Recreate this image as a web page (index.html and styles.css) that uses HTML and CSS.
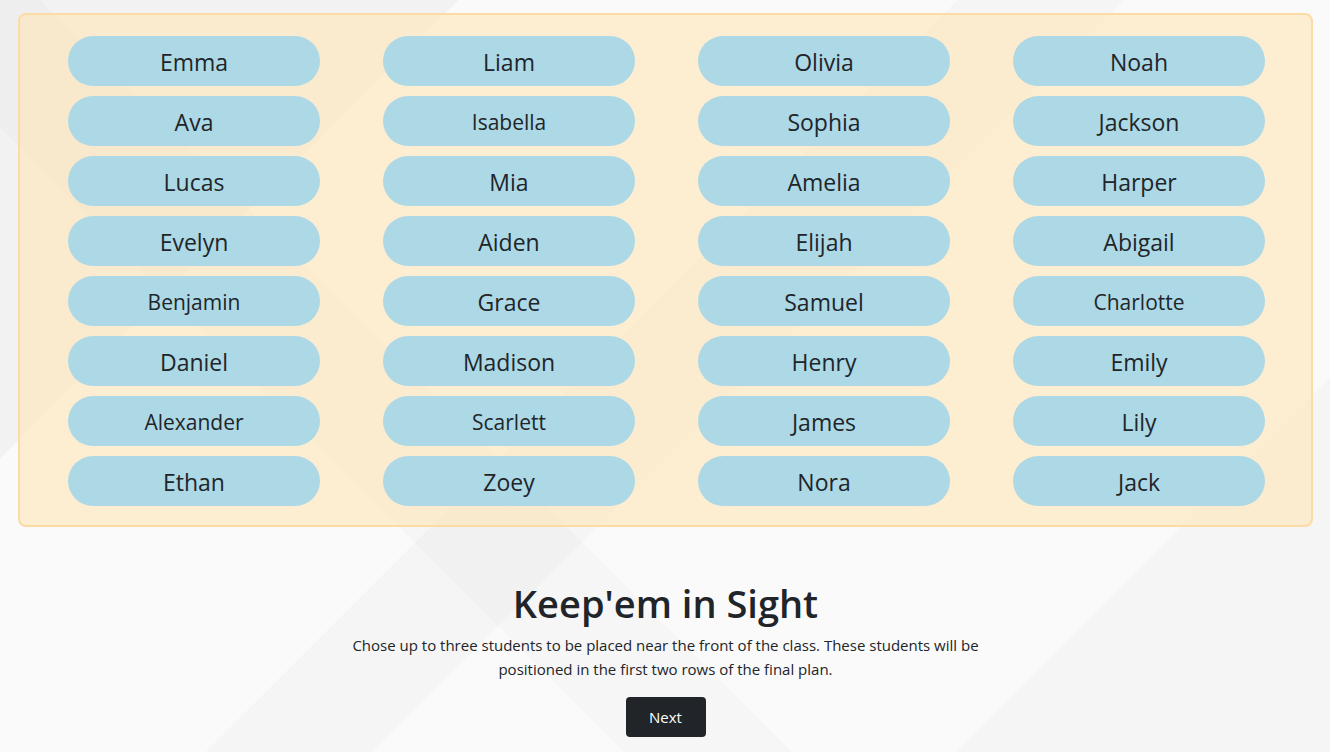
FILE: index.html
```html
<!DOCTYPE html>
<html lang="en">
<head>
<meta charset="utf-8">
<title>Keep'em in Sight</title>
<link rel="stylesheet" href="styles.css">
</head>
<body>
<div class="page">
  <div class="board">
    <div class="cell"><div class="pill">Emma</div></div>
    <div class="cell"><div class="pill">Liam</div></div>
    <div class="cell"><div class="pill">Olivia</div></div>
    <div class="cell"><div class="pill">Noah</div></div>
    <div class="cell"><div class="pill">Ava</div></div>
    <div class="cell"><div class="pill long">Isabella</div></div>
    <div class="cell"><div class="pill">Sophia</div></div>
    <div class="cell"><div class="pill">Jackson</div></div>
    <div class="cell"><div class="pill">Lucas</div></div>
    <div class="cell"><div class="pill">Mia</div></div>
    <div class="cell"><div class="pill">Amelia</div></div>
    <div class="cell"><div class="pill">Harper</div></div>
    <div class="cell"><div class="pill">Evelyn</div></div>
    <div class="cell"><div class="pill">Aiden</div></div>
    <div class="cell"><div class="pill">Elijah</div></div>
    <div class="cell"><div class="pill">Abigail</div></div>
    <div class="cell"><div class="pill long">Benjamin</div></div>
    <div class="cell"><div class="pill">Grace</div></div>
    <div class="cell"><div class="pill">Samuel</div></div>
    <div class="cell"><div class="pill long">Charlotte</div></div>
    <div class="cell"><div class="pill">Daniel</div></div>
    <div class="cell"><div class="pill">Madison</div></div>
    <div class="cell"><div class="pill">Henry</div></div>
    <div class="cell"><div class="pill">Emily</div></div>
    <div class="cell"><div class="pill long">Alexander</div></div>
    <div class="cell"><div class="pill long">Scarlett</div></div>
    <div class="cell"><div class="pill">James</div></div>
    <div class="cell"><div class="pill">Lily</div></div>
    <div class="cell"><div class="pill">Ethan</div></div>
    <div class="cell"><div class="pill">Zoey</div></div>
    <div class="cell"><div class="pill">Nora</div></div>
    <div class="cell"><div class="pill">Jack</div></div>
  </div>
  <div class="intro">
    <h1 class="title">Keep'em in Sight</h1>
    <p class="lead">Chose up to three students to be placed near the front of the class. These students will be positioned in the first two rows of the final plan.</p>
    <button class="next" type="button">Next</button>
  </div>
</div>
</body>
</html>
```

FILE: styles.css
```css
html, body {
  margin: 0;
  padding: 0;
  height: 100%;
}

body {
  font-family: "Open Sans", "Noto Sans", "Liberation Sans", sans-serif;
  color: #212529;
  background-color: #fafafa;
  background-image:
    linear-gradient(135deg, rgba(0,0,0,0) 0, rgba(0,0,0,0) 46%, rgba(0,0,0,0.018) 46%, rgba(0,0,0,0.018) 54%, rgba(0,0,0,0) 54%),
    linear-gradient(45deg, rgba(0,0,0,0) 0, rgba(0,0,0,0) 30%, rgba(0,0,0,0.015) 30%, rgba(0,0,0,0.015) 38%, rgba(0,0,0,0) 38%),
    linear-gradient(135deg, rgba(0,0,0,0.03) 0, rgba(0,0,0,0.03) 22%, rgba(0,0,0,0) 22%),
    linear-gradient(315deg, rgba(0,0,0,0.02) 0, rgba(0,0,0,0.02) 18%, rgba(0,0,0,0) 18%);
  overflow: hidden;
}

.page {
  padding: 13px 17px 0 18px;
}

.board {
  display: grid;
  grid-template-columns: repeat(4, 1fr);
  padding: 16px 14.5px 14px 16.5px;
  background: rgba(255, 228, 181, 0.6);
  border: 2px solid #fcdba6;
  border-radius: 8px;
}

.cell {
  display: flex;
  justify-content: center;
  padding: 5px 0;
}

.pill {
  box-sizing: border-box;
  width: 80%;
  height: 50px;
  padding-top: 2px;
  border-radius: 25px;
  background: #add8e6;
  display: flex;
  align-items: center;
  justify-content: center;
  font-size: 23px;
  color: #212529;
}

.pill.long {
  font-size: 21px;
}

.intro {
  display: flex;
  flex-direction: column;
  align-items: center;
  text-align: center;
  padding-top: 54px;
}

.title {
  margin: 0 0 6px;
  font-size: 38px;
  font-weight: 600;
  line-height: 1.2;
}

.lead {
  margin: 0 0 16px;
  max-width: 650px;
  font-size: 15px;
  line-height: 24px;
}

.next {
  width: 80px;
  height: 40px;
  border: none;
  border-radius: 4px;
  background: #212529;
  color: #fff;
  font-family: inherit;
  font-size: 15px;
  cursor: pointer;
}
```
